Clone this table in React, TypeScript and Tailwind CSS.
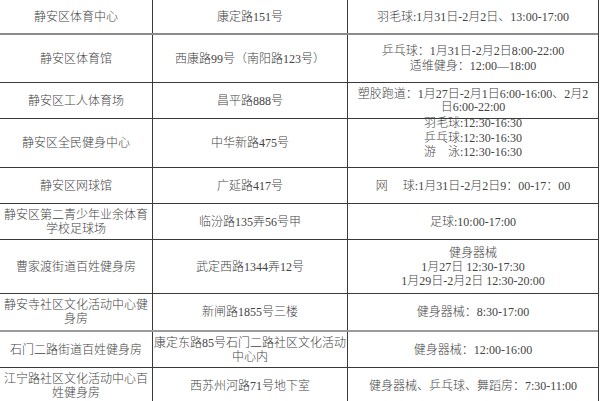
type Row = {
  height: string;
  border: string;
  name: string[];
  address: string[];
  hours: string[];
  hoursClass?: string;
};

const rows: Row[] = [
  {
    height: "h-[35px]",
    border: "border-b-2 border-[#8c8c8c]",
    name: ["静安区体育中心"],
    address: ["康定路151号"],
    hours: ["羽毛球:1月31日-2月2日、13:00-17:00"],
  },
  {
    height: "h-[48px]",
    border: "border-b border-[#3a3a3a]",
    name: ["静安区体育馆"],
    address: ["西康路99号（南阳路123号）"],
    hours: ["乒乓球：1月31日-2月2日8:00-22:00", "适维健身：12:00—18:00"],
    hoursClass: "leading-[15px]",
  },
  {
    height: "h-[36px]",
    border: "border-b border-[#3a3a3a]",
    name: ["静安区工人体育场"],
    address: ["昌平路888号"],
    hours: ["塑胶跑道：1月27日-2月1日6:00-16:00、2月2", "日6:00-22:00"],
    hoursClass: "leading-[13px]",
  },
  {
    height: "h-[49px]",
    border: "border-b border-[#3a3a3a]",
    name: ["静安区全民健身中心"],
    address: ["中华新路475号"],
    hours: ["羽毛球:12:30-16:30", "乒乓球:12:30-16:30", "游　泳:12:30-16:30"],
    hoursClass: "leading-[14.5px] pb-[10px]",
  },
  {
    height: "h-[36px]",
    border: "border-b border-[#3a3a3a]",
    name: ["静安区网球馆"],
    address: ["广延路417号"],
    hours: ["网 　球:1月31日-2月2日9：00-17：00"],
  },
  {
    height: "h-[36px]",
    border: "border-b border-[#3a3a3a]",
    name: ["静安区第二青少年业余体育", "学校足球场"],
    address: ["临汾路135弄56号甲"],
    hours: ["足球:10:00-17:00"],
  },
  {
    height: "h-[54px]",
    border: "border-b border-[#3a3a3a]",
    name: ["曹家渡街道百姓健身房"],
    address: ["武定西路1344弄12号"],
    hours: ["健身器械", "1月27日 12:30-17:30", "1月29日-2月2日 12:30-20:00"],
  },
  {
    height: "h-[38px]",
    border: "border-b-2 border-[#9a9a9a]",
    name: ["静安寺社区文化活动中心健", "身房"],
    address: ["新闸路1855号三楼"],
    hours: ["健身器械：8:30-17:00"],
  },
  {
    height: "h-[36px]",
    border: "border-b border-[#3a3a3a]",
    name: ["石门二路街道百姓健身房"],
    address: ["康定东路85号石门二路社区文化活动", "中心内"],
    hours: ["健身器械：12:00-16:00"],
  },
  {
    height: "h-[36px]",
    border: "border-b border-[#3a3a3a]",
    name: ["江宁路社区文化活动中心百", "姓健身房"],
    address: ["西苏州河路71号地下室"],
    hours: ["健身器械、乒乓球、舞蹈房：7:30-11:00"],
  },
];

function Cell({ lines, className }: { lines: string[]; className: string }) {
  return (
    <div className={`flex flex-col items-center justify-center text-center ${className}`}>
      {lines.map((line) => (
        <span key={line} className="whitespace-pre">
          {line}
        </span>
      ))}
    </div>
  );
}

export default function App() {
  return (
    <div
      className="h-[401px] w-[600px] overflow-hidden bg-white text-[12px] font-light leading-[14px] text-[#444]"
      style={{ fontFamily: '"Liberation Serif", "Noto Sans CJK SC", serif' }}
    >
      <div className="w-[599px] border-r border-[#3a3a3a]">
        {rows.map((row) => (
          <div key={row.name[0]} className={`flex ${row.height} ${row.border}`}>
            <Cell lines={row.name} className="w-[153px] shrink-0 border-r border-[#3a3a3a]" />
            <Cell lines={row.address} className="w-[195px] shrink-0 border-r border-[#3a3a3a]" />
            <Cell lines={row.hours} className={`flex-1 ${row.hoursClass ?? ""}`} />
          </div>
        ))}
      </div>
    </div>
  );
}
